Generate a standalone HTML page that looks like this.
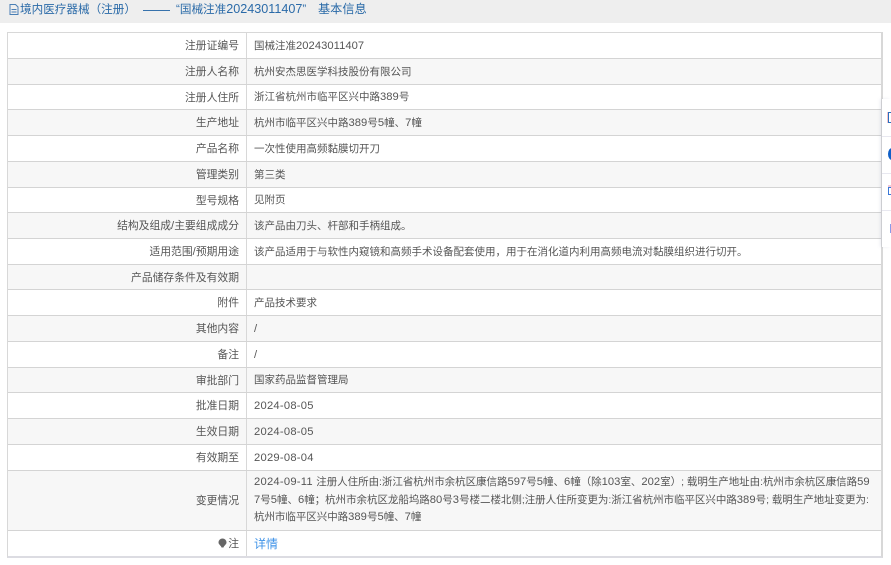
<!DOCTYPE html>
<html lang="zh"><head><meta charset="utf-8">
<style>
html,body{margin:0;padding:0;background:#fff}
body{width:891px;height:565px;overflow:hidden;position:relative;font-family:"Liberation Sans","Noto Sans CJK SC",sans-serif;font-size:10.5px;color:#555}
i{font-style:normal;font-size:11.2px;letter-spacing:.05px}
i.t{letter-spacing:.25px}
.o{position:relative;top:1px}
.hd{position:absolute;left:0;top:0;width:891px;height:23px;background:#eeeeee;color:#2a6aa8;font-size:11.6px;line-height:19px;overflow:hidden}
.hd svg{position:absolute;left:8px;top:3px}
.hd span{position:absolute;top:0;white-space:nowrap}
.hd b{font-weight:normal;font-size:12.6px}
.tb{position:absolute;left:7px;top:32px;border:1px solid #d8d8d8;border-bottom:2px solid #dcdce2;border-right:2px solid #d8d8d8;width:873px;height:523px}
.r{position:absolute;left:0;width:873px;border-bottom:1px solid #d4d4d4;box-sizing:border-box}
.r.g{background:#f7f7f7}
.l{position:absolute;left:0;top:-1px;bottom:0;width:231px;padding-right:7px;display:flex;align-items:center;justify-content:flex-end;white-space:nowrap;font-size:10.8px}
.r::after{content:"";position:absolute;left:237.5px;top:0;bottom:0;width:1.5px;background:#d8d8d8}
.v{position:absolute;left:246px;top:-1px;bottom:0;display:flex;align-items:center;white-space:pre}
</style></head><body>
<div class="hd"><svg width="12" height="13" viewBox="0 0 12 13"><path d="M2 1.5h5.5L10 4v7.5H2z M3.5 6.5h5 M3.5 9h5" fill="none" stroke="#4a7fb5" stroke-width="1"/></svg><span style="left:20px">境内医疗器械（注册）</span><span style="left:143px;font-size:13.5px">——</span><span style="left:176px">“国械注准<b>20243011407</b>”</span><span style="left:318px;font-size:12.2px">基本信息</span></div>
<div class="tb">
<div class="r" style="top:0;height:26px"><div class="l">注册证编号</div><div class="v"><span>国械注准<i>20243011407</i></span></div></div>
<div class="r g" style="top:26px;height:26px"><div class="l">注册人名称</div><div class="v">杭州安杰思医学科技股份有限公司</div></div>
<div class="r" style="top:52px;height:25px"><div class="l">注册人住所</div><div class="v"><span>浙江省杭州市临平区兴中路<i>389</i>号</span></div></div>
<div class="r g" style="top:77px;height:26px"><div class="l">生产地址</div><div class="v"><span>杭州市临平区兴中路<i>389</i>号<i>5</i>幢、<i>7</i>幢</span></div></div>
<div class="r" style="top:103px;height:26px"><div class="l">产品名称</div><div class="v">一次性使用高频黏膜切开刀</div></div>
<div class="r g" style="top:129px;height:26px"><div class="l">管理类别</div><div class="v">第三类</div></div>
<div class="r" style="top:155px;height:25px"><div class="l">型号规格</div><div class="v">见附页</div></div>
<div class="r g" style="top:180px;height:26px"><div class="l"><span>结构及组成<i>/</i>主要组成成分</span></div><div class="v">该产品由刀头、杆部和手柄组成。</div></div>
<div class="r" style="top:206px;height:26px"><div class="l"><span>适用范围<i>/</i>预期用途</span></div><div class="v">该产品适用于与软性内窥镜和高频手术设备配套使用，用于在消化道内利用高频电流对黏膜组织进行切开。</div></div>
<div class="r g" style="top:232px;height:25px"><div class="l">产品储存条件及有效期</div></div>
<div class="r" style="top:257px;height:26px"><div class="l">附件</div><div class="v">产品技术要求</div></div>
<div class="r g" style="top:283px;height:26px"><div class="l">其他内容</div><div class="v"><i class="o">/</i></div></div>
<div class="r" style="top:309px;height:26px"><div class="l">备注</div><div class="v"><i class="o">/</i></div></div>
<div class="r g" style="top:335px;height:25px"><div class="l">审批部门</div><div class="v">国家药品监督管理局</div></div>
<div class="r" style="top:360px;height:26px"><div class="l">批准日期</div><div class="v"><i class="t o">2024-08-05</i></div></div>
<div class="r g" style="top:386px;height:26px"><div class="l">生效日期</div><div class="v"><i class="t o">2024-08-05</i></div></div>
<div class="r" style="top:412px;height:26px"><div class="l">有效期至</div><div class="v"><i class="t o">2029-08-04</i></div></div>
<div class="r g" style="top:438px;height:60px"><div class="l">变更情况</div><div class="v" style="display:block;top:3px;line-height:17.5px;letter-spacing:-.04px"><i class="t">2024-09-11 </i>注册人住所由:浙江省杭州市余杭区康信路<i>597</i>号<i>5</i>幢、<i>6</i>幢（除<i>103</i>室、<i>202</i>室）; 载明生产地址由:杭州市余杭区康信路<i>59</i>
<i>7</i>号<i>5</i>幢、<i>6</i>幢；杭州市余杭区龙船坞路<i>80</i>号<i>3</i>号楼二楼北侧;注册人住所变更为:浙江省杭州市临平区兴中路<i>389</i>号; 载明生产地址变更为:
杭州市临平区兴中路<i>389</i>号<i>5</i>幢、<i>7</i>幢</div></div>
<div class="r" style="top:498px;height:25px;border-bottom:0"><div class="l"><svg width="9" height="11" viewBox="0 0 9 11" style="margin-right:1px"><path d="M4.5 0.5a4 4 0 0 1 4 4c0 2-2.5 3-3 5h-2c-.5-2-3-3-3-5a4 4 0 0 1 4-4z" fill="#666"/></svg>注</div><div class="v" style="color:#3f93e8;font-size:12px">详情</div></div>
</div>
<div style="position:absolute;left:882px;top:99px;width:9px;height:148px;background:#fff;box-shadow:-2px 0 3px rgba(120,130,160,.15)"></div>
<div style="position:absolute;left:882px;top:136px;width:9px;height:1px;background:#e8e8f0"></div>
<div style="position:absolute;left:882px;top:173px;width:9px;height:1px;background:#e8e8f0"></div>
<div style="position:absolute;left:882px;top:210px;width:9px;height:1px;background:#e8e8f0"></div>
<div style="position:absolute;left:888px;top:112px;width:3px;height:11px;border:1px solid #2a6fc0;border-right:0;box-sizing:border-box;box-shadow:-1px 0 0 #f3c4cc"></div>
<div style="position:absolute;left:888px;top:148px;width:8px;height:12px;border-radius:50%;background:#1060c8"></div>
<div style="position:absolute;left:888px;top:187px;width:5px;height:8px;border:1px solid #3b78d8;box-sizing:border-box;box-shadow:0 -2px 0 #f0c8d8"></div>
<div style="position:absolute;left:890px;top:224px;width:1px;height:9px;background:#5a6fe0;opacity:.7"></div>
</body></html>
